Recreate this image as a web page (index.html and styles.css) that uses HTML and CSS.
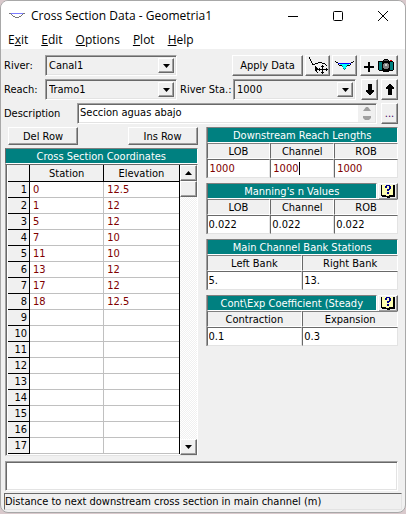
FILE: index.html
```html
<!DOCTYPE html>
<html lang="en">
<head>
<meta charset="utf-8">
<meta name="viewport" content="width=device-width, initial-scale=1">
<title>Cross Section Data - Geometria1</title>
<link rel="stylesheet" href="styles.css">
</head>
<body>
<main class="window">
  <header class="titlebar">
    <svg class="app-icon" width="16" height="16" viewBox="0 0 16 16" shape-rendering="crispEdges"><path d="M2 5.5h12" stroke="#7b7bff" fill="none"/><path d="M0 5h2v1H0zM14 5h2v1h-2zM2 6h1v1H2zM13 6h1v1h-1zM3 7h1v1H3zM12 7h1v1h-1zM4 8h2v1H4zM10 8h2v1h-2zM6 9h4v1H6z" fill="#777"/></svg>
    <h1 class="title">Cross Section Data - Geometria1</h1>
    <button class="caption-btn" aria-label="Minimize"><svg width="10" height="10"><path d="M0 5.5h10" stroke="#000"/></svg></button>
    <button class="caption-btn" aria-label="Maximize"><svg width="10" height="10"><rect x=".5" y=".5" width="9" height="9" rx="1" fill="none" stroke="#000"/></svg></button>
    <button class="caption-btn" aria-label="Close"><svg width="10" height="10"><path d="M0 0l10 10M10 0L0 10" stroke="#000"/></svg></button>
  </header>
  <nav class="menubar">
    <button>E<u>x</u>it</button>
    <button><u>E</u>dit</button>
    <button><u>O</u>ptions</button>
    <button><u>P</u>lot</button>
    <button><u>H</u>elp</button>
  </nav>

  <section class="body">
    <div class="form">
      <div class="line">
        <label class="caption" for="river">River:</label>
        <span class="combo reach-combo"><select id="river"><option>Canal1</option></select><i class="drop raised"><svg width="7" height="4"><path d="M0 0h7L3.5 4z"/></svg></i></span>
        <span class="spring"></span>
        <button class="btn apply">Apply Data</button>
        <button class="btn tool" aria-label="Edit points">
          <svg width="20" height="17" viewBox="0 0 20 17" shape-rendering="crispEdges"><path d="M1 0h1v2H1zM2 2h1v2H2zM3 4h1v2H3zM4 6h1v2H4zM5 7h2v1H5zM7 6h3v1H7zM10 5h4v1h-4zM14 6h3v1h-3zM17 7h1v1h-1zM18 8h1v1h-1z"/><path d="M7 9h1v1h1v1h1v1h1v1H9v2h1v1H9v-1H8v-1H7z"/><path d="M14 8h1v1h1v1h-1v2h3v-1h1v1h1v1h-1v1h-1v-1h-3v2h1v1h-1v1h-1v-1h-1v-1h1v-2h-2v1h-1v-1h-1v-1h1v-1h1v1h2v-2h-1V9h1z"/></svg>
        </button>
        <button class="btn tool" aria-label="Plot cross section">
          <svg width="19" height="9" viewBox="0 0 19 9" shape-rendering="crispEdges"><path d="M4 2h11v1h-1v1h-2v1h-1v2h-1v1H9V7H8V5H7V4H5V3H4z" fill="#0ff"/><path d="M3 2h13v1H3z" fill="#00f"/><path d="M0 0h1v1H0zM1 1h2v1H1zM3 3h1v1H3zM4 4h3v1H4zM12 4h3v1h-3zM15 3h1v1h-1zM16 1h2v1h-2zM18 0h1v1h-1z"/><path d="M7 5h1v1H7zM11 5h1v1h-1zM8 7h1v1H8zM10 7h1v1h-1zM9 8h1v1H9z" fill="#008080"/></svg>
        </button>
        <button class="btn camera" aria-label="Add picture">
          <svg width="30" height="14" viewBox="0 0 30 14" shape-rendering="crispEdges"><path d="M4 3h2v4h4v2H6v4H4V9H0V7h4z"/><path d="M14 2h5V1h1V0h4v1h1v1h4v1h1v8h-1v1h-4v1h-6v-1h-4v-1h-1z"/><path d="M15 3h3v8h-3zM26 3h3v8h-3z" fill="#008080"/><path d="M26 1h2v1h-2z" fill="red"/><path d="M20 1h4v1h-4z" fill="#555"/><circle cx="22" cy="7" r="4"/><circle cx="22" cy="7" r="3" fill="#808080"/><path d="M21 5h2v2h-2z" fill="#ccc"/></svg>
        </button>
      </div>
      <div class="line">
        <label class="caption" for="reach">Reach:</label>
        <span class="combo reach-combo"><select id="reach"><option>Tramo1</option></select><i class="drop raised"><svg width="7" height="4"><path d="M0 0h7L3.5 4z"/></svg></i></span>
        <label class="sta-label" for="sta">River Sta.:</label>
        <span class="combo sta-combo"><select id="sta"><option>1000</option></select><i class="drop raised"><svg width="7" height="4"><path d="M0 0h7L3.5 4z"/></svg></i></span>
        <span class="pair">
          <button class="btn" aria-label="Next station"><svg width="8" height="12"><path d="M2 0h4v6h2v2H7v1H6v1H5v1H3v-1H2V9H1V8H0V6h2z"/></svg></button>
          <button class="btn" aria-label="Previous station"><svg width="8" height="12"><path d="M2 11h4V5h2V3H7V2H6V1H5V0H3v1H2v1H1v1H0v2h2z"/></svg></button>
        </span>
      </div>
      <div class="line">
        <label class="desc-label" for="desc">Description</label>
        <span class="desc sunken"><input id="desc" value="Seccion aguas abajo"><span class="spin"><svg width="8" height="14"><path d="M3 0h2l3 4H0zM0 9h8v2l-2 2H2L0 11z" fill="#a0a0a0"/></svg></span></span>
        <button class="btn more">...</button>
      </div>
    </div>

    <div class="columns">
      <section class="left">
        <div class="row-tools"><button class="btn">Del Row</button><button class="btn">Ins Row</button></div>
        <div class="sheet">
          <h2 class="band">Cross Section Coordinates</h2>
          <div class="sheet-body">
            <table class="coords">
              <thead><tr><th class="num"></th><th>Station</th><th>Elevation</th></tr></thead>
              <tbody>
                <tr><th>1</th><td>0</td><td>12.5</td></tr>
                <tr><th>2</th><td>1</td><td>12</td></tr>
                <tr><th>3</th><td>5</td><td>12</td></tr>
                <tr><th>4</th><td>7</td><td>10</td></tr>
                <tr><th>5</th><td>11</td><td>10</td></tr>
                <tr><th>6</th><td>13</td><td>12</td></tr>
                <tr><th>7</th><td>17</td><td>12</td></tr>
                <tr><th>8</th><td>18</td><td>12.5</td></tr>
                <tr><th>9</th><td></td><td></td></tr>
                <tr><th>10</th><td></td><td></td></tr>
                <tr><th>11</th><td></td><td></td></tr>
                <tr><th>12</th><td></td><td></td></tr>
                <tr><th>13</th><td></td><td></td></tr>
                <tr><th>14</th><td></td><td></td></tr>
                <tr><th>15</th><td></td><td></td></tr>
                <tr><th>16</th><td></td><td></td></tr>
                <tr><th>17</th><td></td><td></td></tr>
              </tbody>
            </table>
            <div class="scroll">
              <button class="raised" aria-label="Scroll up"><svg width="7" height="4"><path d="M0 4h7L3.5 0z"/></svg></button>
              <span class="thumb raised"></span>
              <button class="raised down" aria-label="Scroll down"><svg width="7" height="4"><path d="M0 0h7L3.5 4z"/></svg></button>
            </div>
          </div>
        </div>
      </section>

      <section class="right">
        <div class="group">
          <h2 class="band">Downstream Reach Lengths</h2>
          <div class="fields edited">
            <label for="l1">LOB</label><label for="l2">Channel</label><label for="l3">ROB</label>
            <input id="l1" value="1000"><span class="active"><input id="l2" value="1000"><i class="caret"></i></span><input id="l3" value="1000">
          </div>
        </div>
        <div class="group">
          <div class="head"><h2 class="band">Manning's n Values</h2><button class="raised help" aria-label="Help"><svg width="14" height="13" viewBox="0 0 14 13" shape-rendering="crispEdges"><path d="M1 0h12v11H1z" fill="#ffffb0"/><path d="M0 0h1v10h4v1h3v-1h4V0h2v12H9v1H6v-1H1v-1H0z"/><path d="M4 1h1V0h4v1h1v3H9v1H8v1H6V4h2V1H6v2H4zM6 7h2v2H6z" fill="#00008b"/></svg></button></div>
          <div class="fields">
            <label for="n1">LOB</label><label for="n2">Channel</label><label for="n3">ROB</label>
            <input id="n1" value="0.022"><input id="n2" value="0.022"><input id="n3" value="0.022">
          </div>
        </div>
        <div class="group">
          <h2 class="band">Main Channel Bank Stations</h2>
          <div class="fields two">
            <label for="b1">Left Bank</label><label for="b2">Right Bank</label>
            <input id="b1" value="5."><input id="b2" value="13.">
          </div>
        </div>
        <div class="group">
          <div class="head"><h2 class="band">Cont\Exp Coefficient (Steady</h2><button class="raised help" aria-label="Help"><svg width="14" height="13" viewBox="0 0 14 13" shape-rendering="crispEdges"><path d="M1 0h12v11H1z" fill="#ffffb0"/><path d="M0 0h1v10h4v1h3v-1h4V0h2v12H9v1H6v-1H1v-1H0z"/><path d="M4 1h1V0h4v1h1v3H9v1H8v1H6V4h2V1H6v2H4zM6 7h2v2H6z" fill="#00008b"/></svg></button></div>
          <div class="fields two">
            <label for="c1">Contraction</label><label for="c2">Expansion</label>
            <input id="c1" value="0.1"><input id="c2" value="0.3">
          </div>
        </div>
      </section>
    </div>

    <textarea class="notes sunken" aria-label="Messages"></textarea>
    <footer class="status">Distance to next downstream cross section in main channel (m)</footer>
  </section>
</main>
</body>
</html>
```
FILE: styles.css
```css
* { box-sizing: border-box; }
body {
  margin: 0;
  background: #d9c9cc;
  font: 11px/13px "DejaVu Sans Condensed", "Noto Sans", sans-serif;
  color: #000;
}
button, input, select, textarea {
  font: inherit;
  color: inherit;
  margin: 0;
  padding: 0;
  border: 0;
  border-radius: 0;
  background: none;
  outline: 0;
  min-width: 0;
}
h1, h2 { margin: 0; font-weight: normal; font-size: inherit; }
svg { display: block; flex: none; }

.window {
  min-height: calc(100vh - 1px);
  display: flex;
  flex-direction: column;
  background: #f0f0f0;
  border: 1px solid #a8a8a8;
  border-radius: 8px;
  overflow: hidden;
}
.titlebar {
  display: flex;
  align-items: center;
  height: 30px;
  padding-left: 8px;
  background: #fff;
  font: 12px/18px "Open Sans", "Noto Sans", sans-serif;
}
.title { flex: 1; margin-left: 6px; white-space: nowrap; }
.caption-btn { width: 45px; height: 30px; display: grid; place-items: center; }
.menubar {
  display: flex;
  gap: 13px;
  height: 18px;
  padding-left: 7px;
  background: #fff;
  font: 12px/18px "Open Sans", "Noto Sans", sans-serif;
}
.body { flex: 1; display: flex; flex-direction: column; padding: 6px 3px 2px; }

.raised, .btn {
  background: #f0f0f0;
  border: 1px solid;
  border-color: #fff #696969 #696969 #fff;
  box-shadow: inset -1px -1px #a0a0a0;
  display: grid;
  place-items: center;
}
.sunken, .combo {
  border: 1px solid;
  border-color: #a0a0a0 #fff #fff #a0a0a0;
  box-shadow: inset 1px 1px #696969, inset -1px -1px #e3e3e3;
}

.form { display: flex; flex-direction: column; gap: 3px; padding-right: 4px; }
.line { display: flex; height: 21px; }
.line > label { align-self: center; white-space: nowrap; }
.caption { width: 41px; }
.combo { display: flex; padding: 2px; }
.combo select { appearance: none; flex: 1; padding-left: 1px; }
.drop { width: 16px; pointer-events: none; }
.reach-combo { width: 132px; }
.spring { flex: 1; }
.apply { width: 71px; }
.tool { width: 25px; margin-left: 2px; }
.camera { width: 38px; margin-left: 3px; }
.sta-label { margin-left: 3px; width: 53px; }
.sta-combo { flex: 1; }
.pair { display: flex; gap: 3px; width: 37px; margin-left: 5px; }
.pair .btn { flex: 1; }
.desc-label { width: 73px; }
.desc { flex: 1; display: flex; background: #fff; padding: 1px; }
.desc input { flex: 1; padding: 0 0 2px 1px; }
.spin { width: 17px; display: grid; place-items: center; background: #f0f0f0; }
.more { width: 17px; margin-left: 4px; color: #400060; }

.columns { flex: 1; display: flex; justify-content: space-between; gap: 8px; padding: 3px 4px 0 1px; }
.left { flex: 1; display: flex; flex-direction: column; }
.row-tools { display: flex; justify-content: space-between; margin: 0 0 3px 3px; }
.row-tools .btn { width: 70px; height: 18px; }
.sheet { flex: 1; display: flex; flex-direction: column; }
.band {
  flex: 1;
  height: 16px;
  line-height: 15px;
  border: 1px solid;
  border-color: #808080 #fff #fff #696969;
  background: #008080;
  color: #fff;
  text-align: center;
  white-space: nowrap;
}
.sheet .band { flex: none; }
.sheet-body {
  flex: 1;
  display: flex;
  border: 1px solid;
  border-color: #696969 #fff #e3e3e3 #a0a0a0;
  box-shadow: inset 1px 0 #696969;
  padding-left: 2px;
  background: #fff;
}
.coords { flex: 1; width: 100%; border-collapse: separate; border-spacing: 0; table-layout: fixed; align-self: flex-start; border-right: 1px solid #000; }
.coords th { font-weight: normal; background: #f0f0f0; border: solid #000; border-width: 0 1px 1px 0; }
.coords th, .coords td { height: 16px; padding: 0 3px; line-height: 15px; }
.coords .num { width: 22px; }
.coords thead th { height: 17px; }
.coords tbody th { text-align: right; padding-right: 2px; }
.coords td { color: #800000; border: solid #c0c0c0; border-width: 0 1px 1px 0; }
.coords td:last-child, .coords thead th:last-child { border-right: 0; }
.scroll { flex: none; width: 17px; display: flex; flex-direction: column; background: repeating-conic-gradient(#fff 0 25%, #f0f0f0 0 50%) 0 0 / 2px 2px; }
.scroll .raised { height: 16px; }
.scroll .down { margin-top: auto; }

.right { flex: 1; display: flex; flex-direction: column; gap: 5px; }
.head { display: flex; gap: 1px; height: 16px; }
.help { width: 20px; height: 17px; }
.group { border-left: 1px solid #a0a0a0; }
.fields { display: grid; grid-template-columns: repeat(3, minmax(0, 1fr)); }
.fields.two { grid-template-columns: repeat(2, minmax(0, 1fr)); }
.fields label {
  height: 16px;
  line-height: 15px;
  text-align: center;
  border: 1px solid;
  border-color: #808080 #fff #fff #696969;
}
.fields input {
  display: block;
  width: 100%;
  height: 19px;
  padding-left: 1px;
  background: #fff;
  border: 1px solid;
  border-color: #696969 #e3e3e3 #e3e3e3 #696969;
}
.edited input { color: #800000; padding-left: 2px; }
.active { position: relative; display: block; }
.caret { position: absolute; left: calc(3px + 4ch); top: 3px; width: 1px; height: 13px; background: #000; }

.notes { display: block; height: 30px; margin: 5px 4px 2px 1px; background: #fff; resize: none; }
.status {
  height: 17px;
  line-height: 15px;
  border: 1px solid;
  border-color: #696969 #e3e3e3 #e3e3e3 #696969;
  white-space: nowrap;
}
```
